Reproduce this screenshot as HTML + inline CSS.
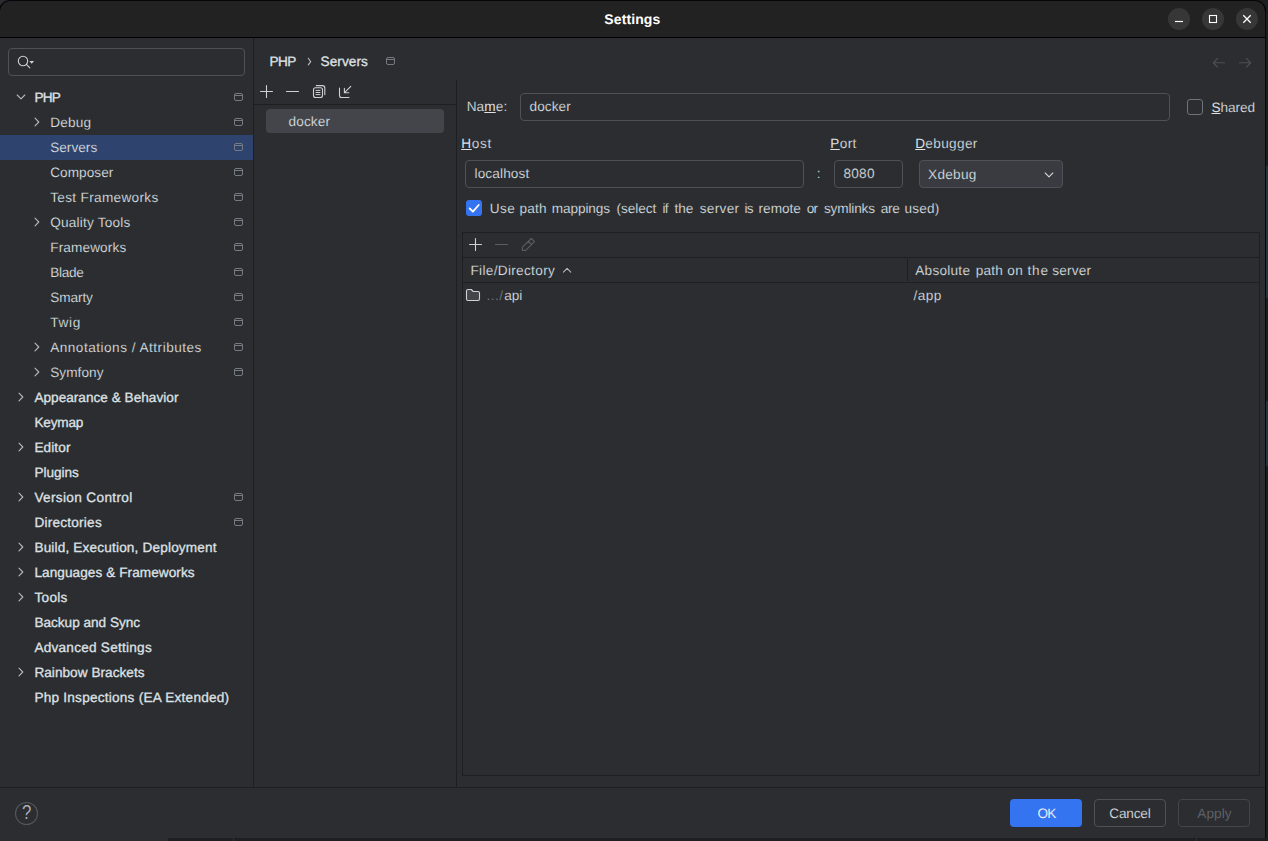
<!DOCTYPE html>
<html lang="en"><head><meta charset="utf-8"><title>Settings</title>
<style>
html,body{margin:0;padding:0;background:#2b2d30;overflow:hidden}
body{width:1268px;height:841px;position:relative;font-family:"Liberation Sans",sans-serif;font-size:13.6px;text-rendering:geometricPrecision;color:#dfe1e5}
.abs,.t,.bx{position:absolute;box-sizing:border-box}
.t{white-space:nowrap;height:25px;line-height:25px;-webkit-text-stroke:0.16px #2b2d30}
.t u{-webkit-text-stroke:0;text-decoration:underline;text-underline-offset:1px;text-decoration-thickness:1px}
.b{-webkit-text-stroke:0.3px #dfe1e5}
svg.ov{position:absolute;left:0;top:0;pointer-events:none}
.ar{fill:none;stroke:#b4b8bf;stroke-width:1.1;stroke-linecap:round;stroke-linejoin:round}
.pi rect,.pi path{fill:none;stroke:#767a82;stroke-width:1}
.inp{border:1px solid #4e5157;border-radius:4px;background:#2b2d30}
</style></head><body>

<!-- desktop strip / outside window -->
<div class="abs" style="left:0;top:0;width:1268px;height:12px;background:#2b2d30"></div>
<div class="abs" style="left:1265px;top:0;width:3px;height:841px;background:#1c1d1f"></div>
<div class="abs" style="left:1266px;top:166px;width:2px;height:132px;background:#22343a"></div>
<div class="abs" style="left:1266px;top:401px;width:2px;height:65px;background:#22343a"></div>
<div class="abs" style="left:1266px;top:11px;width:2px;height:1px;background:#3a3c40"></div>
<div class="abs" style="left:168px;top:838px;width:1097px;height:3px;background:#1e1f22"></div>
<div class="abs" style="left:233px;top:838px;width:1px;height:3px;background:#2f3134"></div>
<div class="abs" style="left:1196px;top:838px;width:1px;height:3px;background:#2f3134"></div>
<div class="abs" style="left:1255px;top:0;width:13px;height:14px;background:#1c1d20"></div>
<!-- title bar -->
<div class="abs" style="left:-1px;top:0;width:1267px;height:38px;background:#222222;border:1px solid #000;border-top-color:#050607;border-radius:11px 11px 0 0;"></div>
<div class="abs" style="left:1265px;top:12px;width:1px;height:826px;background:#0a0a0b"></div>
<!-- left panel -->
<div class="abs inp" style="left:8px;top:48px;width:237px;height:28px;"></div>
<div class="abs" style="left:0;top:135px;width:253px;height:25px;background:#2e436e"></div>
<div class="abs" style="left:253px;top:38px;width:1px;height:749px;background:#1e1f22"></div>
<div class="abs" style="left:0;top:787px;width:1265px;height:1px;background:#1e1f22"></div>
<!-- server list -->
<div class="abs" style="left:254px;top:104px;width:203px;height:1px;background:#1e1f22"></div>
<div class="abs" style="left:456px;top:80px;width:1px;height:707px;background:#1e1f22"></div>
<div class="abs" style="left:266px;top:109px;width:178px;height:24px;background:#43454a;border-radius:4px"></div>
<!-- form -->
<div class="abs inp" style="left:520px;top:93px;width:650px;height:28px;"></div>
<div class="abs" style="left:1187px;top:99px;width:16px;height:16px;border:1px solid #6f737a;border-radius:3px;"></div>
<div class="abs inp" style="left:465px;top:160px;width:339px;height:28px;"></div>
<div class="abs inp" style="left:834px;top:160px;width:69px;height:28px;"></div>
<div class="abs inp" style="left:919px;top:160px;width:144px;height:28px;background:#393b40"></div>
<div class="abs" style="left:466px;top:200px;width:16px;height:16px;background:#3574f0;border-radius:3px"></div>
<!-- table -->
<div class="abs" style="left:462px;top:232px;width:798px;height:544px;border:1px solid #1e1f22"></div>
<div class="abs" style="left:463px;top:257px;width:796px;height:1px;background:#1e1f22"></div>
<div class="abs" style="left:463px;top:282px;width:796px;height:1px;background:#1e1f22"></div>
<div class="abs" style="left:907px;top:259px;width:1px;height:22px;background:#1e1f22"></div>
<!-- buttons -->
<div class="abs" style="left:1010px;top:799px;width:72px;height:28px;background:#3574f0;border-radius:4px"></div>
<div class="abs" style="left:1094px;top:799px;width:72px;height:28px;border:1px solid #4e5157;border-radius:4px"></div>
<div class="abs" style="left:1178px;top:799px;width:72px;height:28px;border:1px solid #43454a;border-radius:4px"></div>
<div class="t" style="left:20.7px;top:801px;width:11px;text-align:center;font-size:20px;color:#b4b8bf;transform:scaleX(.84)">?</div>
<div class="t b" style="left:34.4px;top:85px;letter-spacing:-0.700px;">PHP</div>
<div class="t" style="left:50.2px;top:110px;letter-spacing:0.176px;">Debug</div>
<div class="t" style="left:50.2px;top:135px;letter-spacing:0.027px;-webkit-text-stroke-color:#2e436e;">Servers</div>
<div class="t" style="left:50.2px;top:160px;letter-spacing:0.060px;">Composer</div>
<div class="t" style="left:50.2px;top:185px;letter-spacing:0.330px;">Test Frameworks</div>
<div class="t" style="left:50.2px;top:210px;letter-spacing:0.210px;">Quality Tools</div>
<div class="t" style="left:50.2px;top:235px;letter-spacing:0.136px;">Frameworks</div>
<div class="t" style="left:50.2px;top:260px;letter-spacing:-0.277px;">Blade</div>
<div class="t" style="left:50.2px;top:285px;letter-spacing:-0.071px;">Smarty</div>
<div class="t" style="left:50.2px;top:310px;letter-spacing:0.703px;">Twig</div>
<div class="t" style="left:50.2px;top:335px;letter-spacing:0.496px;">Annotations / Attributes</div>
<div class="t" style="left:50.2px;top:360px;letter-spacing:0.069px;">Symfony</div>
<div class="t b" style="left:34.4px;top:385px;letter-spacing:0.022px;">Appearance &amp; Behavior</div>
<div class="t b" style="left:34.4px;top:410px;letter-spacing:-0.182px;">Keymap</div>
<div class="t b" style="left:34.4px;top:435px;letter-spacing:0.103px;">Editor</div>
<div class="t b" style="left:34.4px;top:460px;letter-spacing:-0.031px;">Plugins</div>
<div class="t b" style="left:34.4px;top:485px;letter-spacing:0.349px;">Version Control</div>
<div class="t b" style="left:34.4px;top:510px;letter-spacing:0.233px;">Directories</div>
<div class="t b" style="left:34.4px;top:535px;letter-spacing:0.171px;">Build, Execution, Deployment</div>
<div class="t b" style="left:34.4px;top:560px;letter-spacing:0.073px;">Languages &amp; Frameworks</div>
<div class="t b" style="left:34.4px;top:585px;letter-spacing:0.316px;">Tools</div>
<div class="t b" style="left:34.4px;top:610px;letter-spacing:-0.007px;">Backup and Sync</div>
<div class="t b" style="left:34.4px;top:635px;letter-spacing:0.246px;">Advanced Settings</div>
<div class="t b" style="left:34.4px;top:660px;letter-spacing:0.043px;">Rainbow Brackets</div>
<div class="t b" style="left:34.4px;top:685px;letter-spacing:0.234px;">Php Inspections (EA Extended)</div>
<div class="t" style="left:604.3px;top:6.5px;letter-spacing:0.108px;font-size:14px;font-weight:bold;color:#fff;-webkit-text-stroke:0;">Settings</div>
<div class="t b" style="left:269.6px;top:49px;letter-spacing:-0.642px;">PHP</div>
<div class="t b" style="left:320.5px;top:49px;letter-spacing:0.077px;">Servers</div>
<div class="t" style="left:288.4px;top:108.5px;letter-spacing:0.185px;-webkit-text-stroke-color:#43454a;">docker</div>
<div class="t" style="left:466.7px;top:93.5px;letter-spacing:0.110px;">Na<u>m</u>e:</div>
<div class="t" style="left:529.5px;top:93.5px;letter-spacing:0.085px;">docker</div>
<div class="t" style="left:1211.5px;top:94.5px;letter-spacing:-0.055px;"><u>S</u>hared</div>
<div class="t" style="left:461.2px;top:130.5px;letter-spacing:0.709px;"><u>H</u>ost</div>
<div class="t" style="left:830.3px;top:130.5px;letter-spacing:0.382px;"><u>P</u>ort</div>
<div class="t" style="left:915.2px;top:130.5px;letter-spacing:0.346px;"><u>D</u>ebugger</div>
<div class="t" style="left:474.5px;top:160.5px;letter-spacing:0.141px;">localhost</div>
<div class="t" style="left:816.8px;top:160.5px;letter-spacing:0.000px;">:</div>
<div class="t" style="left:843.4px;top:160.5px;letter-spacing:0.306px;">8080</div>
<div class="t" style="left:928.1px;top:161.5px;letter-spacing:0.278px;-webkit-text-stroke-color:#393b40;">Xdebug</div>
<div class="t" style="left:489.8px;top:195.5px;letter-spacing:0.393px;">Use</div>
<div class="t" style="left:519.6px;top:195.5px;letter-spacing:0.134px;">path</div>
<div class="t" style="left:551.7px;top:195.5px;letter-spacing:-0.078px;">mappings</div>
<div class="t" style="left:616.6px;top:195.5px;letter-spacing:-0.060px;">(select</div>
<div class="t" style="left:662.44px;top:195.5px;letter-spacing:-0.700px;">if</div>
<div class="t" style="left:674.6px;top:195.5px;letter-spacing:-0.068px;">the</div>
<div class="t" style="left:699.7px;top:195.5px;letter-spacing:0.332px;">server</div>
<div class="t" style="left:744.44px;top:195.5px;letter-spacing:-0.700px;">is</div>
<div class="t" style="left:758.6px;top:195.5px;letter-spacing:-0.010px;">remote</div>
<div class="t" style="left:806.67px;top:195.5px;letter-spacing:-0.700px;">or</div>
<div class="t" style="left:823.9px;top:195.5px;letter-spacing:-0.131px;">symlinks</div>
<div class="t" style="left:880.7px;top:195.5px;letter-spacing:-0.294px;">are</div>
<div class="t" style="left:904.6px;top:195.5px;letter-spacing:0.156px;">used)</div>
<div class="t" style="left:470.4px;top:257.5px;letter-spacing:0.333px;">File/Directory</div>
<div class="t" style="left:915.3px;top:257.5px;letter-spacing:0.251px;">Absolute</div>
<div class="t" style="left:975.7px;top:257.5px;letter-spacing:0.201px;">path</div>
<div class="t" style="left:1007.3px;top:257.5px;letter-spacing:0.340px;">on</div>
<div class="t" style="left:1027.4px;top:257.5px;letter-spacing:0.882px;">the</div>
<div class="t" style="left:1052.2px;top:257.5px;letter-spacing:0.232px;">server</div>
<div class="t" style="left:486.5px;top:282.5px;letter-spacing:0.490px;color:#7a7e86">.../</div>
<div class="t" style="left:504.2px;top:282.5px;letter-spacing:-0.010px;">api</div>
<div class="t" style="left:913.4px;top:282.5px;letter-spacing:0.468px;">/app</div>
<div class="t" style="left:1037.51px;top:800.5px;letter-spacing:-0.700px;color:#fff;-webkit-text-stroke-color:#3574f0;">OK</div>
<div class="t" style="left:1109.3px;top:800.5px;letter-spacing:-0.179px;">Cancel</div>
<div class="t" style="left:1197.3px;top:800.5px;letter-spacing:0.048px;color:#666970">Apply</div>
<svg class="ov" width="1268" height="841" viewBox="0 0 1268 841">
<path d="M17.2 95.0 L21 98.8 L24.8 95.0" class="ar"/>
<g class="pi"><rect x="234.5" y="93.5" width="8" height="7" rx="1.5"/><path d="M234.5 95.5 H242.5"/></g>
<path d="M35 118.2 L38.8 122.0 L35 125.8" class="ar"/>
<g class="pi"><rect x="234.5" y="118.5" width="8" height="7" rx="1.5"/><path d="M234.5 120.5 H242.5"/></g>
<g class="pi"><rect x="234.5" y="143.5" width="8" height="7" rx="1.5"/><path d="M234.5 145.5 H242.5"/></g>
<g class="pi"><rect x="234.5" y="168.5" width="8" height="7" rx="1.5"/><path d="M234.5 170.5 H242.5"/></g>
<g class="pi"><rect x="234.5" y="193.5" width="8" height="7" rx="1.5"/><path d="M234.5 195.5 H242.5"/></g>
<path d="M35 218.2 L38.8 222.0 L35 225.8" class="ar"/>
<g class="pi"><rect x="234.5" y="218.5" width="8" height="7" rx="1.5"/><path d="M234.5 220.5 H242.5"/></g>
<g class="pi"><rect x="234.5" y="243.5" width="8" height="7" rx="1.5"/><path d="M234.5 245.5 H242.5"/></g>
<g class="pi"><rect x="234.5" y="268.5" width="8" height="7" rx="1.5"/><path d="M234.5 270.5 H242.5"/></g>
<g class="pi"><rect x="234.5" y="293.5" width="8" height="7" rx="1.5"/><path d="M234.5 295.5 H242.5"/></g>
<g class="pi"><rect x="234.5" y="318.5" width="8" height="7" rx="1.5"/><path d="M234.5 320.5 H242.5"/></g>
<path d="M35 343.2 L38.8 347.0 L35 350.8" class="ar"/>
<g class="pi"><rect x="234.5" y="343.5" width="8" height="7" rx="1.5"/><path d="M234.5 345.5 H242.5"/></g>
<path d="M35 368.2 L38.8 372.0 L35 375.8" class="ar"/>
<g class="pi"><rect x="234.5" y="368.5" width="8" height="7" rx="1.5"/><path d="M234.5 370.5 H242.5"/></g>
<path d="M19 393.2 L22.8 397.0 L19 400.8" class="ar"/>
<path d="M19 443.2 L22.8 447.0 L19 450.8" class="ar"/>
<path d="M19 493.2 L22.8 497.0 L19 500.8" class="ar"/>
<g class="pi"><rect x="234.5" y="493.5" width="8" height="7" rx="1.5"/><path d="M234.5 495.5 H242.5"/></g>
<g class="pi"><rect x="234.5" y="518.5" width="8" height="7" rx="1.5"/><path d="M234.5 520.5 H242.5"/></g>
<path d="M19 543.2 L22.8 547.0 L19 550.8" class="ar"/>
<path d="M19 568.2 L22.8 572.0 L19 575.8" class="ar"/>
<path d="M19 593.2 L22.8 597.0 L19 600.8" class="ar"/>
<path d="M19 668.2 L22.8 672.0 L19 675.8" class="ar"/>
<!-- window controls -->
<g fill="#373737"><circle cx="1179" cy="19" r="11"/><circle cx="1213" cy="19" r="11"/><circle cx="1247" cy="19" r="11"/></g>
<g fill="none" stroke="#fff" stroke-width="1.1">
<path d="M1175 21.5 H1183" stroke-width="1.2"/>
<rect x="1209.5" y="15.5" width="7" height="7"/>
<path d="M1243.3 15.3 L1250.7 22.7 M1250.7 15.3 L1243.3 22.7" stroke-width="1.3"/>
</g>
<!-- nav arrows -->
<g fill="none" stroke="#4e5157" stroke-width="1.1" stroke-linecap="round" stroke-linejoin="round">
<path d="M1224.5 62.8 H1213.5 M1217.5 58.5 L1213.3 62.8 L1217.5 67"/>
<path d="M1239.5 62.8 H1250.5 M1246.5 58.5 L1250.7 62.8 L1246.5 67"/>
</g>
<circle cx="26.5" cy="813.5" r="11" fill="none" stroke="#53565c" stroke-width="1.1"/>
<!-- search icon -->
<g fill="none" stroke="#ced0d6" stroke-width="1.1" stroke-linecap="round">
<circle cx="23" cy="61" r="4.7"/><path d="M26.4 64.4 L29.8 67.8"/>
</g>
<path d="M29.3 61 h4.8 l-2.4 2.8 z" fill="#ced0d6"/>
<!-- breadcrumb chevron + icon -->
<path d="M308.3 58.3 L310.7 61.6 L308.3 64.9" class="ar" style="stroke:#b4b8bf"/>
<g class="pi"><rect x="386.5" y="57.5" width="8" height="7" rx="1.5"/><path d="M386.5 59.5 H394.5"/></g>
<!-- server list toolbar -->
<g fill="none" stroke="#ced0d6" stroke-width="1.1" stroke-linecap="round" stroke-linejoin="round">
<path d="M260.5 91.5 H272.5 M266.5 85.5 V97.5"/>
<path d="M286.5 91.5 H298.5"/>
<rect x="313.5" y="87.8" width="9" height="9.7" rx="2"/><path d="M316.3 85.6 H322.5 Q324.8 85.6 324.8 87.9 V94.6"/><path d="M316 90.4 h4 M316 92.5 h4 M316 94.6 h4" stroke-width="1"/>
<path d="M339.5 88 V95.5 Q339.5 97.5 341.5 97.5 H349 M350.8 86.3 L344.5 92.6 M344.4 88.3 V92.7 H348.8"/>
</g>
<!-- combo chevron -->
<path d="M1045.2 173 L1049 176.8 L1052.8 173" class="ar" style="stroke:#ced0d6"/>
<!-- checkbox tick -->
<path d="M469.7 208.5 L472.9 211.6 L478.7 205" fill="none" stroke="#fff" stroke-width="1.8" stroke-linecap="round" stroke-linejoin="round"/>
<!-- table toolbar -->
<g fill="none" stroke-width="1.1" stroke-linecap="round" stroke-linejoin="round">
<path d="M469.5 244.5 H481.5 M475.5 238.5 V250.5" stroke="#ced0d6"/>
<path d="M495.5 244.5 H507.5" stroke="#5a5d63"/>
<path d="M522.4 250.4 V247.2 L531.3 238.5 L534.4 241.6 L525.7 250.4 Z M528.4 241.4 L531.5 244.5" stroke="#5a5d63"/>
</g>
<!-- sort arrow -->
<path d="M563.4 272.1 L567.1 268.4 L570.8 272.1" class="ar" style="stroke:#b4b8bf"/>
<!-- folder -->
<path d="M466.5 291 Q466.5 289.5 468 289.5 H471.3 L473.2 291.5 H478 Q479.5 291.5 479.5 293 V299 Q479.5 300.5 478 300.5 H468 Q466.5 300.5 466.5 299 Z" fill="#43454a" stroke="#ced0d6" stroke-width="1.1" stroke-linejoin="round"/>
</svg>
</body></html>
